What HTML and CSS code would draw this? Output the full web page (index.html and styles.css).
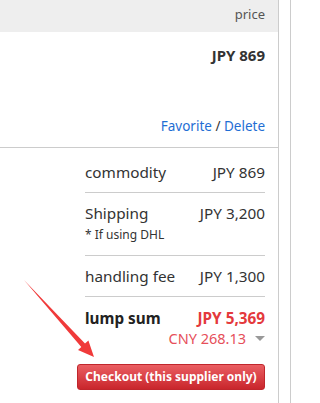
FILE: index.html
```html
<!DOCTYPE html>
<html>
<head>
<meta charset="utf-8">
<link rel="stylesheet" href="styles.css">
</head>
<body>
<div class="page">
  <div class="main">
    <div class="head">price</div>
    <div class="item">
      <div class="price">JPY 869</div>
      <div class="ops"><a class="link">Favorite</a> / <a class="link">Delete</a></div>
    </div>
    <div class="summary">
      <div class="sum">
        <div class="row"><span>commodity</span><span>JPY 869</span></div>
        <div class="row row-ship">
          <div class="line"><span>Shipping</span><span>JPY 3,200</span></div>
          <div class="note">* If using DHL</div>
        </div>
        <div class="row"><span>handling fee</span><span>JPY 1,300</span></div>
        <div class="row total">
          <div class="line"><span class="lbl">lump sum</span><span class="amt">JPY 5,369</span></div>
          <div class="cny"><span>CNY 268.13</span><span class="tri"></span></div>
        </div>
      </div>
      <div class="btn-wrap"><button class="btn">Checkout (this supplier only)</button></div>
      <svg class="arrow" width="100" height="90" viewBox="0 0 100 90">
        <polygon points="24,10 85,73.5 88.4,70.5 94,87 78,80 81.3,76.9" fill="#f03a3a"/>
      </svg>
    </div>
  </div>
  <div class="gap"></div>
  <div class="side"></div>
</div>
</body>
</html>
```
FILE: styles.css
```css
html, body { margin: 0; padding: 0; background: #fff; }
body {
  font-family: "Noto Sans", "Open Sans", sans-serif;
  color: #333;
  font-size: 14px;
}
.page { display: flex; height: 403px; width: 291px; overflow: hidden; }
.main {
  width: 278px;
  border-right: 1px solid #cccccc;
  display: flex;
  flex-direction: column;
}
.gap { width: 11px; }
.side { width: 0; border-left: 1px solid #cccccc; }
.head {
  background: #eeeeee;
  height: 32px;
  box-sizing: border-box;
  padding: 4px 13px 0 0;
  line-height: 20px;
  text-align: right;
  font-size: 13px;
  color: #555;
}
.item {
  height: 115px;
  border-bottom: 1px solid #cccccc;
  padding-right: 13px;
  text-align: right;
  display: flex;
  flex-direction: column;
}
.price { font-weight: bold; font-size: 15px; margin-top: 13px; line-height: 20px; }
.ops { margin-top: auto; margin-bottom: 11px; line-height: 20px; color: #333; font-size: 13.5px; }
.link { color: #1f6ed4; text-decoration: none; }
.summary { position: relative; flex: 1; padding: 4px 13px 0 0; }
.sum { width: 180px; margin-left: auto; font-size: 15.3px; }
.row {
  display: flex;
  justify-content: space-between;
  padding: 10px 0;
  line-height: 20px;
  border-bottom: 1px solid #cccccc;
}
.row-ship, .total { display: block; }
.row-ship { padding-bottom: 11px; }
.line { display: flex; justify-content: space-between; }
.note { font-size: 12px; line-height: 18px; margin-top: 3px; }
.total { border-bottom: none; padding: 11px 0 0; }
.lbl { font-weight: bold; color: #222; }
.amt { font-weight: bold; color: #e4393c; }
.cny { display: flex; justify-content: flex-end; align-items: center; color: #e6505a; font-size: 14.5px; }
.tri {
  width: 0; height: 0;
  margin-left: 9px;
  border-left: 5.5px solid transparent;
  border-right: 5.5px solid transparent;
  border-top: 5px solid #999;
}
.btn-wrap { display: flex; justify-content: flex-end; margin-top: 16px; }
.btn {
  width: 188px;
  height: 26px;
  border: 1px solid #c0262c;
  border-radius: 3px;
  background: linear-gradient(#ea5e62, #c9262c);
  color: #fff;
  font-family: "Noto Sans", "Open Sans", sans-serif;
  font-weight: bold;
  font-size: 12px;
  padding: 0;
  line-height: 24px;
}
.arrow { position: absolute; left: 0; top: 122px; }
```
